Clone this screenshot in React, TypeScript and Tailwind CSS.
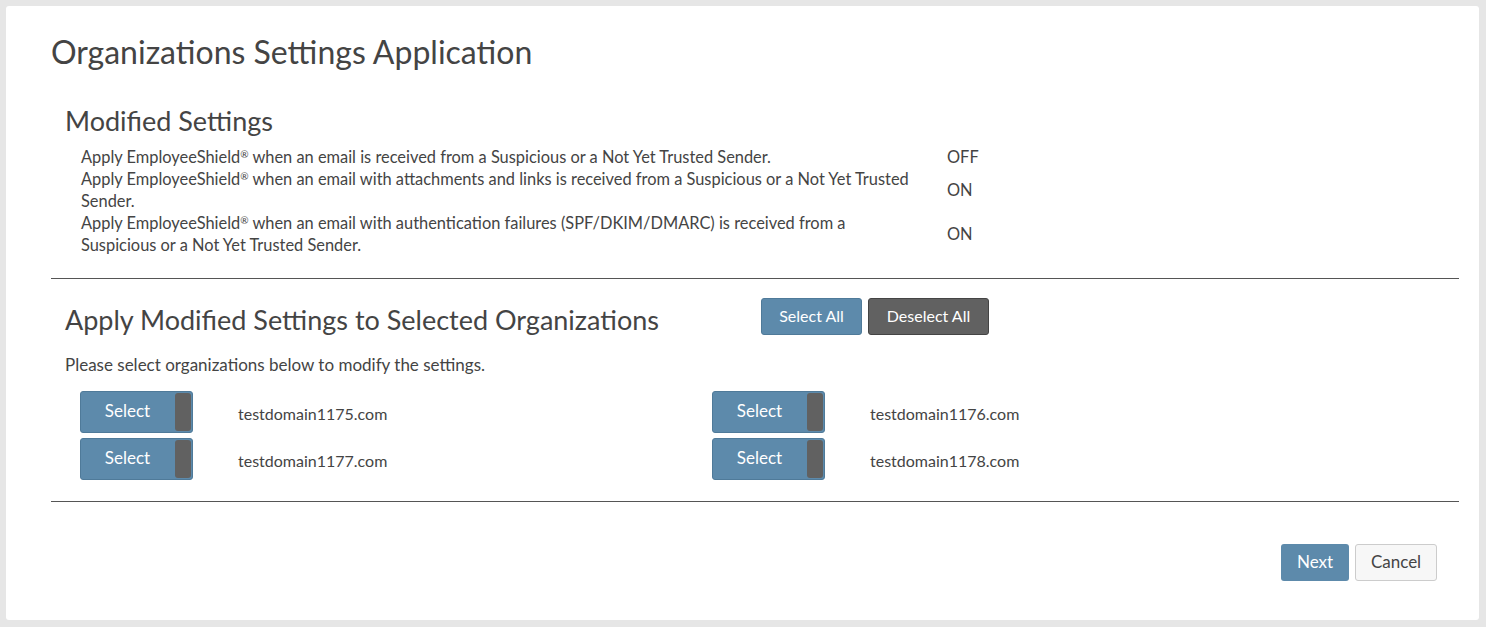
import React from "react";

const rows: [React.ReactNode, string][] = [
  [<>Apply EmployeeShield<sup className="text-[10px]">®</sup> when an email is received from a Suspicious or a Not Yet Trusted Sender.</>, "OFF"],
  [<>Apply EmployeeShield<sup className="text-[10px]">®</sup> when an email with attachments and links is received from a Suspicious or a Not Yet Trusted Sender.</>, "ON"],
  [<>Apply EmployeeShield<sup className="text-[10px]">®</sup> when an email with authentication failures (SPF/DKIM/DMARC) is received from a Suspicious or a Not Yet Trusted Sender.</>, "ON"],
];

function Sel({ d }: { d: string }) {
  return (
    <div className="flex items-center h-[44px]">
      <div className="ml-[15px] w-[113px] h-[42px] rounded-[3px] bg-[#5d8aab] border border-[#4f7a99] flex items-stretch">
        <div className="flex-1 text-white text-[17px] text-center pt-[6px]">Select</div>
        <div className="w-[16px] bg-[#616161] rounded-[3px] m-[1px]" />
      </div>
      <div className="ml-[45px] text-[16px] mt-[4px]">{d}</div>
    </div>
  );
}

export default function App() {
  return (
    <div className="min-h-[627px] bg-[#e6e6e6] p-[6px] pb-[7px] text-[#444]" style={{ fontFamily: "Lato, 'Noto Sans', sans-serif" }}>
      <div className="bg-white rounded-[3px] h-[614px] w-[1473px] pl-[45px] pr-[20px]">
        <h1 className="text-[32px] pt-[28px] leading-[36px]">Organizations Settings Application</h1>
        <div className="pl-[14px]">
          <h2 className="text-[27px] mt-[36px] leading-[30px]">Modified Settings</h2>
          <div className="mt-[10px] pl-[16px] text-[16.4px] leading-[22px]">
            {rows.map(([t, v], i) => (
              <div key={i} className="flex items-center">
                <div className="w-[840px]">{t}</div>
                <div className="ml-[26px] text-[16.4px]">{v}</div>
              </div>
            ))}
          </div>
        </div>
        <div className="border-t border-[#555] mt-[22px] w-[1408px]" />
        <div className="pl-[14px]">
          <div className="flex items-center mt-[18px]">
            <h2 className="text-[27px] w-[696px] leading-[30px] mt-[8px]">Apply Modified Settings to Selected Organizations</h2>
            <button className="h-[37px] w-[101px] bg-[#5d8aab] border border-[#4f7a99] rounded-[3px] text-white text-[16px]">Select All</button>
            <button className="ml-[6px] h-[37px] w-[121px] bg-[#616161] border border-[#444] rounded-[3px] text-white text-[16px]">Deselect All</button>
          </div>
          <p className="text-[17px] mt-[17px]">Please select organizations below to modify the settings.</p>
          <div className="grid grid-cols-[632px_1fr] mt-[12px] gap-y-[3px]">
            <Sel d="testdomain1175.com" />
            <Sel d="testdomain1176.com" />
            <Sel d="testdomain1177.com" />
            <Sel d="testdomain1178.com" />
          </div>
        </div>
        <div className="border-t border-[#555] mt-[20px] w-[1408px]" />
        <div className="flex justify-end mt-[42px] pr-[22px] gap-[6px]">
          <button className="h-[37px] w-[68px] bg-[#5d8aab] rounded-[3px] text-white text-[17px]">Next</button>
          <button className="h-[37px] w-[82px] bg-[#f7f7f7] border border-[#ccc] rounded-[3px] text-[17px]">Cancel</button>
        </div>
      </div>
    </div>
  );
}
